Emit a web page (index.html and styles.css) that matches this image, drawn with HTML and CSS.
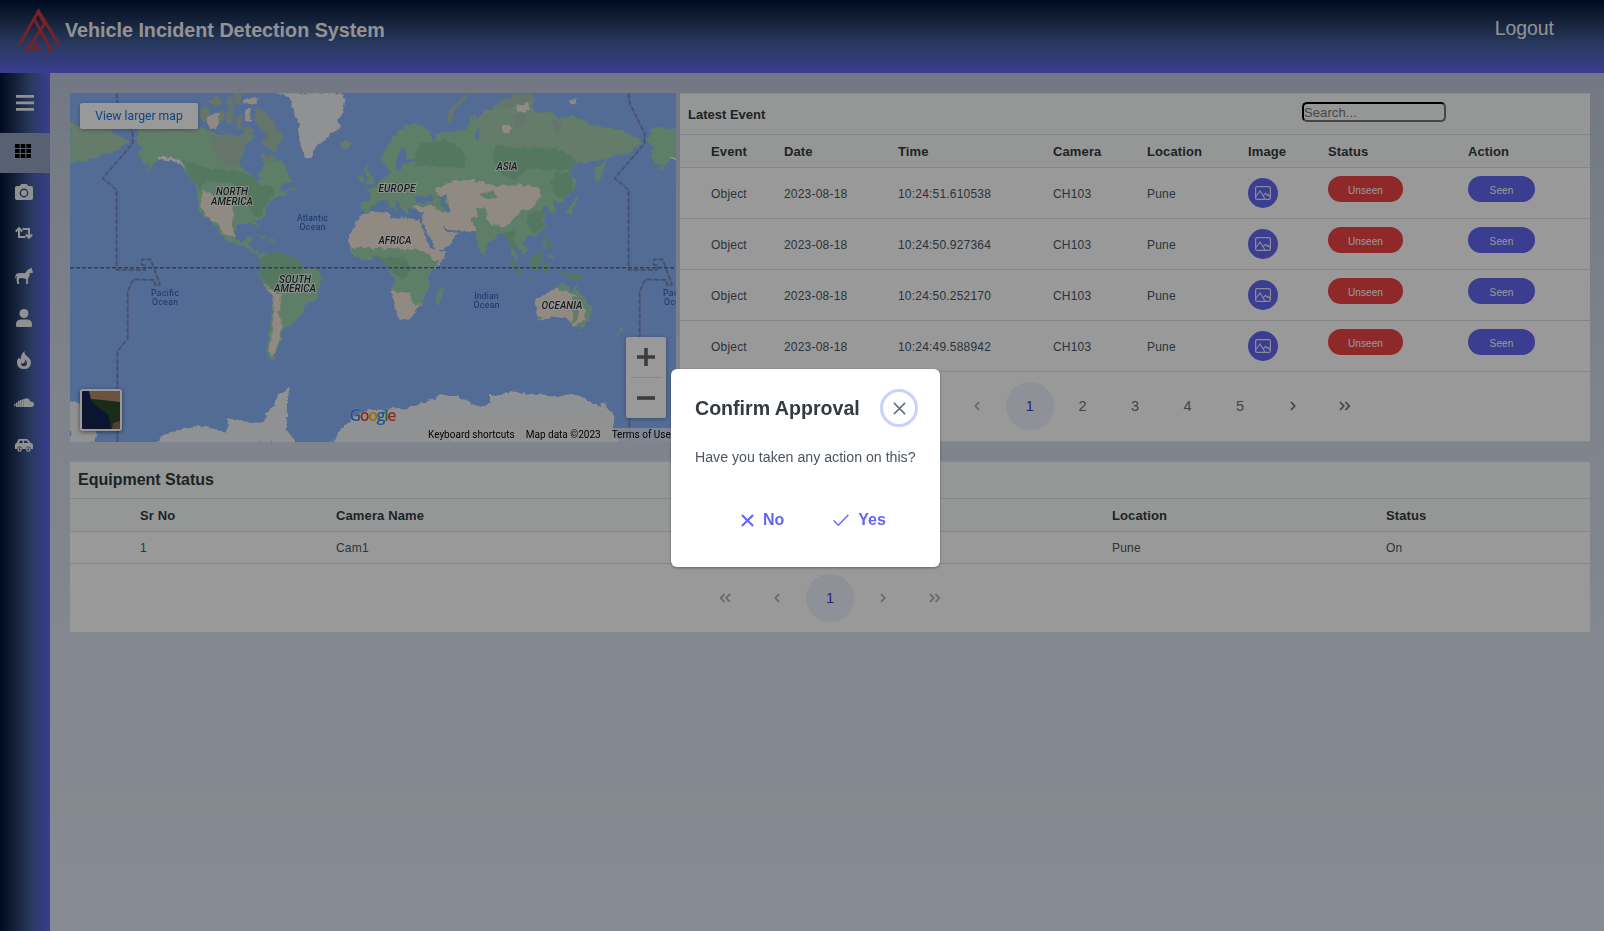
FILE: index.html
```html
<!DOCTYPE html>
<html lang="en">
<head>
<meta charset="utf-8">
<title>Vehicle Incident Detection System</title>
<link rel="stylesheet" href="styles.css">
</head>
<body>
<svg class="defs" width="0" height="0">
  <symbol id="i-image" viewBox="0 0 16 14"><rect x=".6" y=".6" width="14.8" height="12.8" rx="1.5"/><path d="M1 10.5 5 5l5 8M8.500 9.300l2-2 2 2.200 1-1 2 3"/></symbol>
  <symbol id="i-left" viewBox="0 0 6 10"><path d="M5 1 1.300 5 5 9"/></symbol>
  <symbol id="i-right" viewBox="0 0 6 10"><path d="M1 1l3.700 4L1 9"/></symbol>
  <symbol id="i-dleft" viewBox="0 0 12 10"><path d="M5.500 1 1.800 5l3.700 4M11 1 7.300 5 11 9"/></symbol>
  <symbol id="i-dright" viewBox="0 0 12 10"><path d="M1 1l3.700 4L1 9M6.500 1l3.700 4-3.700 4"/></symbol>
  <symbol id="i-x" viewBox="0 0 14 14"><path d="M1 1l12 12M13 1 1 13"/></symbol>
  <symbol id="i-check" viewBox="0 0 16 12"><path d="M.6 6.500l4.800 4.700L15.400.8"/></symbol>
</svg>

<header class="topbar">
  <svg class="logo" viewBox="0 0 46 48" width="46" height="48">
    <path d="M4 37.500 22.500 5 42.500 37.500M18.500 13.500 35.500 44.500M27.500 19.500 15 38 10 44.500M22.500 6l6 12-6 9.500M17 44l3.500-7"/>
    <path class="solid" d="M22 39.500l3 5h-6zM1 36.500h5l-1.500 2H1zM40 36.500h4.500l1 2H41zM9 43h5l-1 2H9zM32 43h4l1 2h-5z"/>
  </svg>
  <h1 class="title">Vehicle Incident Detection System</h1>
  <a class="logout">Logout</a>
</header>

<div class="shell">
  <nav class="side">
    <a class="burger"><svg viewBox="0 0 18 16" width="18" height="16"><path d="M0 0h18v2.800H0zM0 6.400h18v2.800H0zM0 12.900h18v2.800H0z"/></svg></a>
    <a class="item active"><svg viewBox="0 0 16 14" width="16" height="14"><path d="M0 0h4.600v4H0zM5.700 0h4.600v4H5.700zM11.400 0H16v4h-4.600zM0 5h4.600v4H0zM5.700 5h4.600v4H5.700zM11.400 5H16v4h-4.600zM0 10h4.600v4H0zM5.700 10h4.600v4H5.700zM11.400 10H16v4h-4.600z"/></svg></a>
    <a class="item"><svg viewBox="0 0 18 16" width="18" height="16"><path fill-rule="evenodd" d="M1.700 2H5l.7-1.400Q6 0 6.700 0h4.600q.7 0 1 .6L13 2h3.300Q18 2 18 3.700v10.600q0 1.700-1.700 1.700H1.700Q0 16 0 14.300V3.700Q0 2 1.700 2zM9 4.600a4.400 4.400 0 1 0 0 8.800 4.400 4.400 0 0 0 0-8.800zM9 6a3 3 0 1 1 0 6 3 3 0 0 1 0-6z"/></svg></a>
    <a class="item"><svg viewBox="0 0 18 12" width="18" height="12"><path class="ln" d="M10.500 10H4V1.500M.8 4.500 4 1.200l3.200 3.300M7.500 2H14v8.500M10.800 7.500 14 10.800l3.200-3.300"/></svg></a>
    <a class="item"><svg viewBox="0 0 18 16" width="18" height="16"><path d="M.3 10Q0 6 3 5.200q4-.6 7 0L12.600 2 15.500.3 17 0l-.2 1.500L18 4l-.8 1.200-2.200-.5-.8 4.300-1.200 1.600V16h-1.800v-5L7 9.900 4 10.600 3.600 12.500 4.200 16H2.400l-1-4.300.8-2.700-.5-1.500-.4 3z"/></svg></a>
    <a class="item"><svg viewBox="0 0 16 18" width="16" height="18"><circle cx="8" cy="4.500" r="4.500"/><path d="M0 15.500Q0 10.800 4.500 10.500h7q4.500.3 4.500 5V16.500Q16 18 14.500 18h-13Q0 18 0 16.500z"/></svg></a>
    <a class="item"><svg viewBox="0 0 14 18" width="14" height="18"><path fill-rule="evenodd" d="M7.600 0q-.6 3 2.400 5.200Q14 8 14 11.200 14 18 7 18T0 11.200Q0 8.500 2 6.500q.6 1.500 1.800 1.800Q3.600 3 7.600 0zM7.500 8.300Q9 11 6.500 12.200 4 13 4.200 11q-.8 4.200 2.800 4.200 3.200-.2 3-3.200-.3-2.400-2.500-3.700z"/></svg></a>
    <a class="item"><svg viewBox="0 0 20 9" width="20" height="9"><path d="M10 9V1.200Q11 0 13 .2q2.800.6 3.300 3.300Q20 3.200 20 6.300 19.800 9 17.500 9zM8 1.200h1.800V9H8zM6 2h1.700v7H6zM4 2.700h1.700V9H4zM2 4.500h1.600V9H2zM.2 5.800h1.300v2.400H.2z"/></svg></a>
    <a class="item"><svg viewBox="0 0 18 13" width="18" height="13"><path fill-rule="evenodd" d="M4.500 0h7q1 0 1.700.8L15.800 4q2.200.3 2.200 2.400V10h-2a2.600 2.600 0 0 0-5.200 0H7.200A2.600 2.600 0 0 0 2 10H0V6q0-1.600 1.600-2L3 1Q3.500 0 4.500 0zM5 1.700 4 4h3.600V1.700zM9 1.700V4h4.500l-1.900-2.300z"/><path fill-rule="evenodd" d="M4.600 8.200a2.300 2.300 0 1 0 0 4.600 2.300 2.300 0 0 0 0-4.600zm0 1.300a1 1 0 1 1 0 2 1 1 0 0 1 0-2zM13.400 8.200a2.300 2.300 0 1 0 0 4.600 2.300 2.300 0 0 0 0-4.600zm0 1.300a1 1 0 1 1 0 2 1 1 0 0 1 0-2z"/></svg></a>
  </nav>

  <main class="content">
    <section class="row">
      <div class="map">
        <svg class="world" viewBox="0 0 606 349" width="606" height="349">
          <defs>
            <filter id="rough" x="0" y="0" width="100%" height="100%" filterUnits="userSpaceOnUse" primitiveUnits="userSpaceOnUse">
              <feTurbulence type="fractalNoise" baseFrequency=".16" numOctaves="3" seed="4"/>
              <feDisplacementMap in="SourceGraphic" scale="6" xChannelSelector="R" yChannelSelector="G"/>
            </filter>
            <g id="land">
              <g transform="translate(-10 -13) scale(.33333)">
                <path class="g" d="M232 190 215 175 240 165 232 150 260 140 330 150 370 148 420 140 470 165 500 160 530 165 560 160 590 170 575 175 555 205 540 240 540 265 575 280 588 305 600 300 598 280 610 262 605 222 640 228 650 245 665 240 675 265 700 305 660 318 668 335 690 330 670 345 650 350 640 360 620 380 620 400 600 420 590 428 598 450 590 445 580 430 550 432 530 435 522 460 528 480 545 490 560 472 578 475 568 495 580 505 600 522 620 520 605 535 565 508 545 500 510 490 490 470 470 445 455 425 430 405 415 390 412 335 405 310 385 285 370 262 345 240 300 235 285 250 270 268 250 275 270 255 250 250 240 235 235 215 250 205Z"/>
                <path class="m" d="M450 170 500 165 560 165 570 180 550 205 538 240 540 262 500 255 470 235 455 205Z"/>
                <path class="d" d="M370 240 400 250 470 270 530 272 575 285 590 310 640 320 640 345 620 375 600 410 580 410 560 350 520 310 440 300 420 330 400 300 380 270Z"/>
                <path class="s" d="M430 330 460 350 515 365 520 400 515 440 525 465 510 470 490 460 470 430 440 410 420 380Z"/>
                <path class="m" d="M415 85 440 82 455 100 445 125 425 120ZM440 60 470 50 490 60 480 72 450 72ZM500 60 525 45 520 85 505 90ZM520 40 545 40 540 75 528 70ZM500 100 520 90 520 130 500 140ZM530 110 550 95 545 145 530 150ZM590 80 620 100 645 135 675 180 650 195 655 215 620 205 600 190 620 170 600 140 580 120ZM545 145 570 135 580 160 560 165ZM360 85 400 88 410 110 380 120ZM610 225 645 228 655 248 610 250ZM690 318 708 322 705 332 688 328ZM470 100 485 90 495 115 480 125Z"/>
                <path class="s" d="M440 115 475 100 480 125 465 148 445 140ZM555 95 572 88 570 128 558 125ZM550 58 592 55 592 72 555 70Z"/>
                <path class="w" d="M645 40 690 52 700 80 705 110 720 130 715 160 720 190 730 220 745 238 755 230 765 205 790 180 820 160 840 145 835 120 850 95 855 60 848 40ZM290 228 330 232 360 242 375 262 345 246 300 236Z"/>
                <path class="t" d="M842 190 855 183 878 188 872 202 855 208Z"/>
                <path class="g" d="M588 463 620 472 608 475ZM622 478 642 480 630 486Z"/>
                <path class="t" d="M30 125 70 145 150 150 210 185 190 200 150 220 130 222 90 240 30 248Z"/>
              </g>
              <g transform="translate(-10 167) scale(.33333)">
                <path class="g" d="M605 -5 625 -22 665 -22 690 -10 722 5 730 25 765 30 790 50 775 90 768 120 735 135 728 160 705 185 690 200 670 208 662 225 665 240 650 250 655 268 640 285 650 300 628 298 618 280 622 240 630 200 635 150 640 105 610 70 595 45 605 20Z"/>
                <path class="d" d="M605 -5 625 -22 665 -22 690 -10 722 5 730 25 720 50 690 60 650 95 615 65 598 42Z"/>
                <path class="s" d="M605 68 640 95 665 105 655 160 665 195 655 245 640 290 625 270 640 200 638 110Z"/>
              </g>
              <path class="s" d="M292 120 306 118.700 318 120 320 124 328 127 332 124 350 127 353 137 358 149 363 157 376 159 372 169 363 177 357 182 361 195 353 202 353 210 347 215 340 225 330 227 326 219 321 200 325 187 317 175 315 169 305 165 292 167 285 164 279 154 279 144 285 132Z"/>
              <path class="g" d="M280 154 300 155 320 155 345 157 358 160 362 167 370 167 363 177 357 182 361 195 353 202 353 210 345 214 340 200 322 198 325 187 317 175 315 169 305 165 292 167 285 164Z"/>
              <path class="d" d="M300 163 318 164 335 164 342 175 335 187 325 182 315 170Z"/>
              <g transform="translate(300 167) scale(.33333)">
                <path class="g" d="M205 90 222 82 215 120 205 137 195 125Z"/>
                <path class="d" d="M415 0 430 2 450 30 460 48 445 42ZM480 0 500 -20 515 -30 512 20 500 35 482 25ZM458 48 500 58 490 62 460 55ZM520 10 540 5 530 40 522 35ZM565 35 600 38 630 45 645 65 600 58ZM515 -80 545 -50 540 -30Z"/>
                <path class="s" d="M495 120 530 100 560 85 580 72 600 85 605 98 620 75 632 105 662 145 655 180 640 200 610 198 590 175 550 170 505 180 500 160 495 135Z"/>
                <path class="g" d="M560 85 580 72 600 82 605 98 620 75 632 105 662 145 655 180 640 200 612 198 645 180 648 150 625 115 600 100ZM500 168 520 170 505 180ZM628 216 642 216 635 226ZM752 195 765 203 725 245 748 215ZM-930 110 -912 115 -905 150 -915 180 -930 195Z"/>
              </g>
              <g transform="translate(300 -13) scale(.33333)">
                <path class="g" d="M-28 362 2 362 3 342-10 330 18 318 40 290 65 280 60 275 35 245 40 215 60 185 85 150 110 135 140 132 165 145 185 165 180 185 195 175 200 160 240 155 262 150 290 150 300 110 315 108 325 130 315 175 325 180 340 115 360 110 380 90 378 75 400 60 440 45 490 42 495 65 470 85 500 100 540 95 565 110 590 115 600 105 640 120 670 140 740 145 770 160 820 185 800 200 780 215 770 225 740 225 710 235 660 235 640 245 610 255 600 275 612 310 600 345 575 365 550 365 555 400 540 395 530 375 515 385 525 410 525 440 500 465 470 470 455 490 475 510 460 525 440 495 430 500 445 555 425 520 420 480 400 455 385 465 355 490 345 525 330 515 315 460 290 450 240 450 215 430 230 455 262 462 240 495 200 515 185 490 160 440 160 415 165 400 140 395 135 380 120 385 110 405 95 380 70 360 85 400 60 375 45 360 20 365 5 385-5 395-28 390Z"/>
                <path class="t" d="M320 110 378 75 470 50 495 100 600 120 700 145 740 150 810 185 740 220 650 230 600 245 560 200 400 200 330 180Z"/>
                <path class="m" d="M380 75 400 60 440 45 490 42 492 62 450 75 400 85ZM550 110 575 130 565 170 550 150ZM430 110 470 95 465 140 435 145Z"/>
                <path class="d" d="M150 190 230 180 280 215 290 240 280 265 200 260 130 255 140 220ZM375 195 440 205 560 205 620 240 600 270 560 270 470 265 440 300 400 290 370 240ZM555 275 600 280 608 320 590 355 560 350 540 310ZM470 400 520 390 520 440 490 460 470 430ZM400 460 430 450 440 500 425 510Z"/>
                <path class="s" d="M200 325 260 300 310 300 350 310 380 318 450 315 500 322 515 345 490 380 450 395 420 430 400 440 360 430 330 400 305 420 320 455 290 455 240 450 215 430 230 455 262 462 240 495 200 515 185 490 160 440 160 415 168 400 140 395 130 378 190 378 215 395 235 400 235 345 205 345ZM395 135 418 135 422 160 400 160ZM440 75 475 70 480 92 445 95Z"/>
                <path class="g" d="M330 340 370 335 385 350 345 360ZM318 385 345 380 350 420 325 410Z"/>
                <path class="s" d="M600 55 620 55 622 70 602 70Z"/>
                <path class="g" d="M-12 258 5 290 14 310-15 316-5 298-15 280ZM-32 290-18 290-20 305-33 305ZM675 265 700 245 710 225 705 260 685 305 675 290ZM605 290 620 300 610 340ZM615 345 628 350 605 402 578 405 600 385 612 370ZM525 480 530 500 522 500ZM540 520 550 540 538 535ZM340 510 350 520 345 530Z"/>
                <path class="m" d="M235 100 250 75 298 40 285 58 255 85 248 130 235 120Z"/>
                <path class="o" d="M135 352 150 345 165 350 190 340 188 362 160 370 138 368ZM205 345 235 340 222 360 240 392 222 390 212 365ZM100 200 85 215 75 262 90 272 100 250 150 240 110 235 108 212ZM153 438 162 435 200 512 190 508Z"/>
              </g>
              <path class="w" d="M85 350 93 342 123 333 137 334 157 340 158 325 183 330 197 327 196 319 203 314 207 305 220 293 217 307 217 337 227 350ZM262 350 268 340 283 324 300 317 333 316 353 310 372 302 387 302 400 310 410 314 420 309 420 302 433 302 442 297 450 300 487 304 500 301 513 304 530 314 532 309 545 322 543 335 548 350ZM0 309 10 310 12 317 27 340 24 350 0 350Z"/>
            </g>
            <g id="line" transform="translate(-10 -13) scale(.33333)">
              <path d="M170 40 172 68 218 160V190L128 295 170 330V570H255V555H245V538H272L300 615H285L283 600 220 598 203 635V775L172 815V1090"/>
            </g>
          </defs>
          <rect width="606" height="349" fill="#8ab4f8"/>
          <g filter="url(#rough)">
            <use href="#land"/>
            <use href="#land" x="512"/>
          </g>
          <g class="dates"><use href="#line"/><use href="#line" x="512"/></g>
          <path class="equator" d="M0 174.700H606"/>
          <g class="cont">
            <text x="162" y="102" textLength="32">NORTH</text><text x="162" y="112" textLength="42">AMERICA</text>
            <text x="225" y="190" textLength="32">SOUTH</text><text x="225" y="199" textLength="42">AMERICA</text>
            <text x="327" y="99" textLength="37">EUROPE</text><text x="437" y="77" textLength="21">ASIA</text>
            <text x="325" y="151" textLength="33">AFRICA</text><text x="492" y="216" textLength="41">OCEANIA</text>
          </g>
          <g class="sea">
            <text x="242.500" y="128" textLength="31">Atlantic</text><text x="242.500" y="136.500" textLength="26">Ocean</text>
            <text x="95" y="203" textLength="28">Pacific</text><text x="95" y="211.500" textLength="26">Ocean</text>
            <text x="416.500" y="206" textLength="24">Indian</text><text x="416.500" y="214.500" textLength="26">Ocean</text>
            <text x="607" y="203" textLength="28">Pacific</text><text x="607" y="211.500" textLength="26">Ocean</text>
          </g>
          <text class="google" x="279.500" y="328" textLength="47"><tspan fill="#4285f4">G</tspan><tspan fill="#ea4335">o</tspan><tspan fill="#fbbc04">o</tspan><tspan fill="#4285f4">g</tspan><tspan fill="#34a853">l</tspan><tspan fill="#ea4335">e</tspan></text>
        </svg>
        <a class="larger">View larger map</a>
        <svg class="thumb" viewBox="0 0 38 38" width="42" height="42"><rect width="38" height="38" fill="#13234f"/><path d="M7 0h31v12L20 10 9 8z" fill="#b48a6c"/><path d="M8 8l13 1 17 2v27h-9l-3-15-12-8z" fill="#2c4a2a"/><path d="M30 38l1-6 7-2v8z" fill="#8a6a50"/></svg>
        <div class="zoom">
          <svg viewBox="0 0 18 18" width="18" height="18"><path d="M7.200 0h3.600v7.200H18v3.600h-7.200V18H7.200v-7.200H0V7.200h7.200z"/></svg>
          <i></i>
          <svg viewBox="0 0 18 18" width="18" height="18"><path d="M0 7.200h18v3.600H0z"/></svg>
        </div>
        <div class="legal"><span>Keyboard shortcuts</span><span>Map data ©2023</span><span>Terms of Use</span></div>
      </div>

      <div class="card events">
        <div class="caption"><b>Latest Event</b><input class="search" placeholder="Search..."></div>
        <table class="grid">
          <colgroup><col class="e0"><col class="e1"><col class="e2"><col class="e3"><col class="e4"><col class="e5"><col class="e6"><col class="e7"><col></colgroup>
          <thead><tr><th></th><th>Event</th><th>Date</th><th>Time</th><th>Camera</th><th>Location</th><th>Image</th><th>Status</th><th>Action</th></tr></thead>
          <tbody>
            <tr><td></td><td>Object</td><td>2023-08-18</td><td>10:24:51.610538</td><td>CH103</td><td>Pune</td><td class="ctl"><span class="pic"><svg width="16" height="14"><use href="#i-image"/></svg></span></td><td class="ctl"><button class="pill red">Unseen</button></td><td class="ctl"><button class="pill">Seen</button></td></tr>
            <tr><td></td><td>Object</td><td>2023-08-18</td><td>10:24:50.927364</td><td>CH103</td><td>Pune</td><td class="ctl"><span class="pic"><svg width="16" height="14"><use href="#i-image"/></svg></span></td><td class="ctl"><button class="pill red">Unseen</button></td><td class="ctl"><button class="pill">Seen</button></td></tr>
            <tr><td></td><td>Object</td><td>2023-08-18</td><td>10:24:50.252170</td><td>CH103</td><td>Pune</td><td class="ctl"><span class="pic"><svg width="16" height="14"><use href="#i-image"/></svg></span></td><td class="ctl"><button class="pill red">Unseen</button></td><td class="ctl"><button class="pill">Seen</button></td></tr>
            <tr><td></td><td>Object</td><td>2023-08-18</td><td>10:24:49.588942</td><td>CH103</td><td>Pune</td><td class="ctl"><span class="pic"><svg width="16" height="14"><use href="#i-image"/></svg></span></td><td class="ctl"><button class="pill red">Unseen</button></td><td class="ctl"><button class="pill">Seen</button></td></tr>
          </tbody>
        </table>
        <div class="pager">
          <span class="off"><svg width="12" height="10"><use href="#i-dleft"/></svg></span>
          <span class="off"><svg width="6" height="10"><use href="#i-left"/></svg></span>
          <span class="on">1</span><span>2</span><span>3</span><span>4</span><span>5</span>
          <span><svg width="6" height="10"><use href="#i-right"/></svg></span>
          <span><svg width="12" height="10"><use href="#i-dright"/></svg></span>
        </div>
      </div>
    </section>

    <section class="card equipment">
      <div class="caption"><b>Equipment Status</b></div>
      <table class="grid">
        <colgroup><col class="q0"><col class="q1"><col class="q2"><col class="q3"><col></colgroup>
        <thead><tr><th></th><th>Sr No</th><th>Camera Name</th><th>Location</th><th>Status</th></tr></thead>
        <tbody><tr><td></td><td>1</td><td>Cam1</td><td>Pune</td><td>On</td></tr></tbody>
      </table>
      <div class="pager">
        <span class="off"><svg width="12" height="10"><use href="#i-dleft"/></svg></span>
        <span class="off"><svg width="6" height="10"><use href="#i-left"/></svg></span>
        <span class="on">1</span>
        <span class="off"><svg width="6" height="10"><use href="#i-right"/></svg></span>
        <span class="off"><svg width="12" height="10"><use href="#i-dright"/></svg></span>
      </div>
    </section>
  </main>
</div>

<div class="mask">
  <div class="dialog" role="dialog">
    <div class="dlg-head"><h2>Confirm Approval</h2><span class="close"><svg width="13" height="13"><use href="#i-x"/></svg></span></div>
    <p>Have you taken any action on this?</p>
    <div class="dlg-foot">
      <a><svg class="bold" width="13" height="13"><use href="#i-x"/></svg>No</a>
      <a><svg width="16" height="12"><use href="#i-check"/></svg>Yes</a>
    </div>
  </div>
</div>
</body>
</html>
```

FILE: styles.css
```css
* { box-sizing: border-box; }
body { margin: 0; height: 931px; overflow: hidden; font-family: "Liberation Sans", Arial, sans-serif; font-size: 12px; color: #4b5563; }
.defs { position: absolute; }
svg { display: block; fill: none; stroke: none; }

.topbar { height: 73px; display: flex; align-items: flex-start; padding: 6px 50px 0 16px; background: linear-gradient(#00143a 0, #1e3358 25%, #43609e 60%, #6366f1 100%); color: #fff; }
.logo { stroke: #cb3840; stroke-width: 2.900; }
.logo .solid { fill: #cb3840; stroke: none; }
.title { margin: 12px auto 0 3px; font-size: 19.720px; line-height: 24px; font-weight: 700; color: #f4f4f4; }
.logout { margin-top: 10px; font-size: 19.400px; line-height: 24px; color: #f4f4f4; }

.shell { display: flex; height: 858px; }
.side { width: 50px; background: linear-gradient(90deg, #00143a 0, #1e3358 27%, #43609e 62%, #6366f1 100%); }
.side svg { fill: #f2f2f2; }
.side .ln { fill: none; stroke: #f2f2f2; stroke-width: 2; }
.burger { height: 60px; display: flex; align-items: center; padding-left: 16px; }
.item { height: 42px; display: flex; align-items: center; justify-content: center; padding-right: 2px; }
.item.active { height: 40px; background: #93a2c0; padding: 0 4px 4px 0; }
.item.active + .item { height: 38px; }
.item.active + .item + .item { height: 44px; }
.item.active svg { fill: #000; }
.item:last-child { padding-top: 3px; }

.content { flex: 1; padding: 20px 14px 0 20px; background: linear-gradient(#bfc8da, #d3dbea 40%, #dae1ee 65%, #e0e7f4); }
.row { display: flex; gap: 4px; height: 349px; }
.map { position: relative; width: 606px; height: 349px; overflow: hidden; }
.g { fill: #9fd3ae; } .t { fill: #a8cfb2; } .m { fill: #a9c4b0; } .d { fill: #8cc7a0; } .s { fill: #f0e6da; } .w { fill: #f1f2f3; } .o { fill: #8ab4f8; }
.dates { stroke: #6b5470; stroke-width: 3; stroke-dasharray: 16 5; }
.equator { stroke: #62628c; stroke-width: 1.500; stroke-dasharray: 4 2; }
.cont text { font: italic 500 10px Roboto, sans-serif; fill: #2b2f33; text-anchor: middle; stroke: #fff; stroke-opacity: .7; stroke-width: 2; paint-order: stroke; }
.sea text { font: 400 8.500px Roboto, sans-serif; fill: #2058b8; text-anchor: middle; }
.google { font: 600 16px "Open Sans", sans-serif; stroke: #fff; stroke-opacity: .4; stroke-width: 1; paint-order: stroke; }
.larger { position: absolute; left: 10px; top: 10px; width: 118px; height: 26px; line-height: 26px; text-align: center; background: #fff; border-radius: 2px; box-shadow: 0 1px 4px rgba(0,0,0,.3); color: #1a73e8; font-family: Roboto, sans-serif; font-size: 12.200px; }
.thumb { position: absolute; left: 10px; top: 296px; border: 2px solid #fff; border-radius: 3px; box-shadow: 0 1px 4px rgba(0,0,0,.5); }
.zoom { position: absolute; left: 556px; top: 244px; width: 40px; height: 81px; padding: 11px 0; display: flex; flex-direction: column; align-items: center; justify-content: space-between; background: #fff; border-radius: 2px; box-shadow: 0 1px 4px rgba(0,0,0,.3); }
.zoom svg { fill: #666; }
.zoom i { width: 30px; height: 1px; background: #e0e0e0; }
.legal { position: absolute; right: 0; bottom: 0; left: 353px; height: 14px; display: flex; font: 10px/14px Roboto, sans-serif; color: #000; white-space: nowrap; }
.legal span { background: rgba(245,245,245,.7); padding: 0 5px; width: 85px; margin-right: 1px; }
.legal span:first-child { width: 97px; }

.card { background: #fff; border: 1px solid #e5e7eb; border-width: 1px 0; }
.events { width: 910px; }
.caption { display: flex; background: #f9fafb; border-bottom: 1px solid #dcdfe4; padding: 0 8px; color: #343a40; }
.events .caption { height: 41px; font-size: 13px; line-height: 41px; justify-content: space-between; }
.search { width: 144px; height: 20px; margin: 8px 136px 0 0; padding: 0; border: 2px inset #767676; border-color: #111 #767676 #767676 #111; border-radius: 5px; background: transparent; font: 13px "Liberation Sans", sans-serif; letter-spacing: .1px; }
.search::placeholder { color: #757575; }
.grid { width: 100%; table-layout: fixed; border-collapse: separate; border-spacing: 0; }
th, td { padding: 0; text-align: left; border-bottom: 1px solid #dcdfe4; white-space: nowrap; }
th { height: 33px; background: #f9fafb; color: #343a40; font-size: 13px; letter-spacing: .12px; }
td { height: 51px; letter-spacing: .2px; }
.events td { padding-top: 1px; }
.events td.ctl { padding-top: 0; }
.e0 { width: 31px; } .e1 { width: 73px; } .e2 { width: 114px; } .e3 { width: 155px; } .e4 { width: 94px; } .e5 { width: 101px; } .e6 { width: 80px; } .e7 { width: 140px; }
.pic { width: 30px; height: 30px; border-radius: 50%; background: #6366f1; display: flex; align-items: center; justify-content: center; }
.pic svg { stroke: #e8e8ff; stroke-width: 1.200; }
.pill { display: block; width: 67px; height: 26px; margin-bottom: 8px; padding: 2px 0 0; border: 0; border-radius: 13px; background: #6366f1; color: #fff; font: 10px "Liberation Sans", sans-serif; letter-spacing: .1px; }
.pill.red { width: 75px; background: #ef4444; }
.pager { display: flex; justify-content: center; align-items: center; height: 67px; gap: 4.570px; font-size: 14.500px; color: #6b7280; }
.pager span { width: 48px; height: 48px; border-radius: 50%; display: flex; align-items: center; justify-content: center; }
.pager svg { stroke: #6b7280; stroke-width: 1.700; }
.pager .off { opacity: .6; }
.pager .on { background: #eef2ff; color: #4338ca; }

.equipment { margin-top: 19px; height: 172px; }
.equipment .caption { height: 37px; font-size: 16px; line-height: 35px; }
.equipment td { height: 32px; }
.q0 { width: 70px; } .q1 { width: 196px; } .q2 { width: 776px; } .q3 { width: 274px; }

.mask { position: absolute; inset: 0; background: rgba(0,0,0,.4); display: flex; align-items: center; justify-content: center; padding-top: 5px; padding-left: 7px; }
.dialog { width: 269px; height: 198px; padding: 20px 24px 0; background: #fff; border-radius: 6px; box-shadow: 0 1px 3px rgba(0,0,0,.35); }
.dlg-head { display: flex; justify-content: space-between; align-items: center; height: 38px; margin-right: -2px; }
h2 { margin: 0; font-size: 19.600px; color: #343a40; }
.close { width: 38px; height: 38px; border: 3px solid #c7d2fe; border-radius: 50%; display: flex; align-items: center; justify-content: center; }
.close svg { stroke: #6b7280; stroke-width: 1.800; }
.dialog p { margin: 21px 0 0; font-size: 14.180px; line-height: 18px; white-space: nowrap; color: #4b5563; }
.dlg-foot { display: flex; gap: 49px; margin: 44px 0 0 46px; font-size: 16px; line-height: 20px; font-weight: 700; color: #6366f1; }
.dlg-foot a { display: flex; align-items: center; gap: 9px; }
.dlg-foot svg { stroke: #6366f1; stroke-width: 1.400; }
.dlg-foot .bold { stroke-width: 2.200; }
```
